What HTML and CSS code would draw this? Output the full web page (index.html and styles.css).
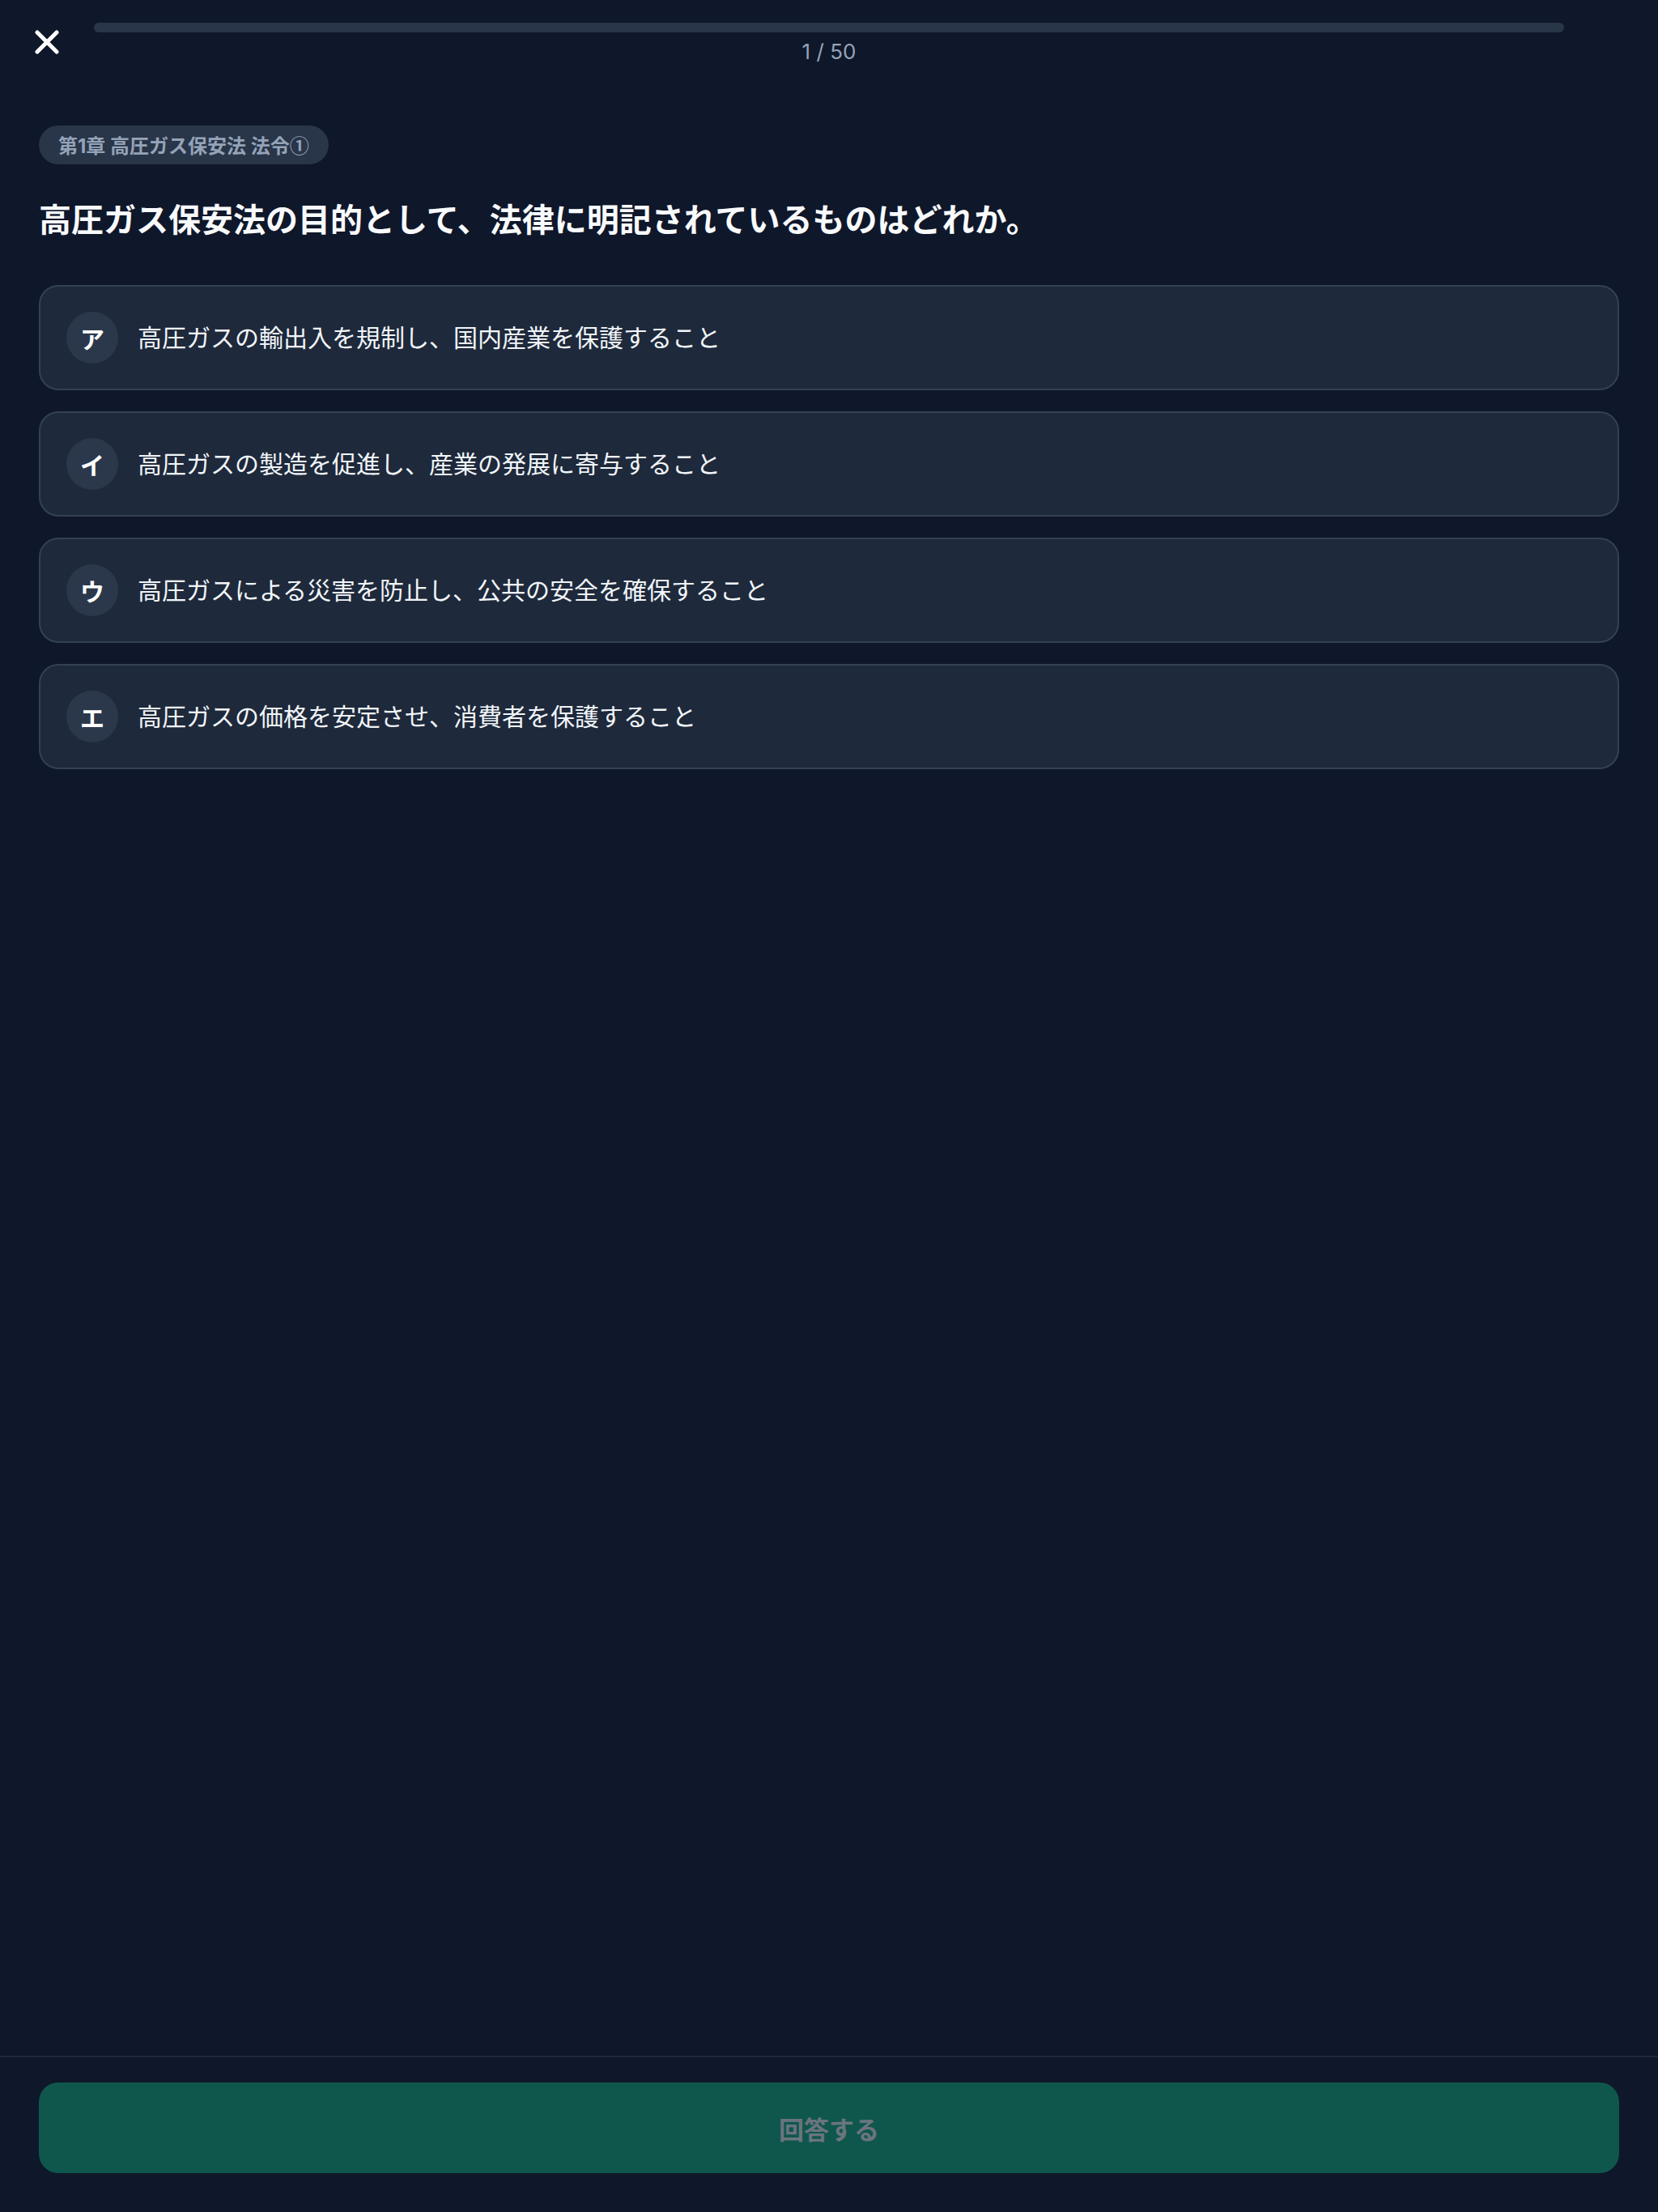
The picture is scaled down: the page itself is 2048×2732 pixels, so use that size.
FILE: index.html
```html
<!DOCTYPE html>
<html lang="ja">
<head>
<meta charset="utf-8">
<title>Quiz</title>
<link rel="stylesheet" href="styles.css">
</head>
<body>
<div class="app">
  <header class="top">
    <button class="close" aria-label="閉じる">
      <svg viewBox="0 0 30 30" width="30" height="30"><path d="M3 3 L27 27 M27 3 L3 27" stroke="#ffffff" stroke-width="5" stroke-linecap="round" fill="none"/></svg>
    </button>
    <div class="progress">
      <div class="track"><div class="fill" style="width:0%"></div></div>
      <div class="counter">1 / 50</div>
    </div>
  </header>
  <main class="content">
    <span class="badge">第1章 高圧ガス保安法 法令<span class="circled">①</span></span>
    <h1 class="question">高圧ガス保安法の目的として、法律に明記されているものはどれか。</h1>
    <ul class="options">
      <li class="option"><span class="mark">ア</span><span class="label">高圧ガスの輸出入を規制し、国内産業を保護すること</span></li>
      <li class="option"><span class="mark">イ</span><span class="label">高圧ガスの製造を促進し、産業の発展に寄与すること</span></li>
      <li class="option"><span class="mark">ウ</span><span class="label">高圧ガスによる災害を防止し、公共の安全を確保すること</span></li>
      <li class="option"><span class="mark">エ</span><span class="label">高圧ガスの価格を安定させ、消費者を保護すること</span></li>
    </ul>
  </main>
  <footer class="bottom">
    <button class="submit" disabled>回答する</button>
  </footer>
</div>
</body>
</html>
```
FILE: styles.css
```css
* { box-sizing: border-box; }
html, body { margin: 0; padding: 0; }
body {
  background: #0f172a;
  font-family: "Inter", "Noto Sans CJK JP", "Noto Sans", sans-serif;
  color: #f8fafc;
}
.app {
  min-height: 2732px;
  display: flex;
  flex-direction: column;
}
.top {
  display: flex;
  align-items: flex-start;
  padding: 28px 116px 0 0;
}
.close {
  width: 44px;
  height: 44px;
  margin: 2px 36px 0 36px;
  padding: 0;
  border: none;
  background: transparent;
  display: flex;
  align-items: center;
  justify-content: center;
}
.close svg { display: block; }
.progress {
  flex: 1;
  display: flex;
  flex-direction: column;
  align-items: center;
}
.track {
  width: 100%;
  height: 12px;
  border-radius: 6px;
  background: #293548;
  overflow: hidden;
}
.fill { height: 100%; background: #10b981; }
.counter {
  margin-top: 4px;
  font-size: 26px;
  line-height: 40px;
  color: #94a3b8;
}
.content {
  flex: 1;
  padding: 71px 48px 0;
  display: flex;
  flex-direction: column;
  align-items: flex-start;
}
.badge {
  display: inline-block;
  height: 48px;
  line-height: 48px;
  padding: 0 24px;
  border-radius: 24px;
  background: #293548;
  color: #94a3b8;
  font-size: 24px;
  font-weight: 700;
}
.circled {
  font-family: "Noto Sans CJK JP", sans-serif;
  font-weight: 700;
}
.question {
  margin: 39px 0 50px;
  font-size: 40px;
  line-height: 60px;
  font-weight: 700;
  color: #f8fafc;
}
.options {
  list-style: none;
  margin: 0;
  padding: 0;
  width: 100%;
  display: flex;
  flex-direction: column;
  gap: 26px;
}
.option {
  height: 130px;
  display: flex;
  align-items: center;
  gap: 24px;
  padding: 0 32px;
  background: #1e293b;
  border: 2px solid #334155;
  border-radius: 24px;
}
.mark {
  width: 64px;
  height: 64px;
  flex: none;
  border-radius: 50%;
  background: #2b384b;
  display: flex;
  align-items: center;
  justify-content: center;
  font-size: 30px;
  font-weight: 700;
  color: #ffffff;
}
.label {
  font-size: 30px;
  line-height: 44px;
  color: #f1f5f9;
}
.bottom {
  border-top: 2px solid #1e293b;
  padding: 31px 48px 48px;
}
.submit {
  width: 100%;
  height: 112px;
  border: none;
  border-radius: 24px;
  background: #0f574c;
  color: #6b7480;
  font-family: inherit;
  font-size: 31px;
  font-weight: 700;
}
```
